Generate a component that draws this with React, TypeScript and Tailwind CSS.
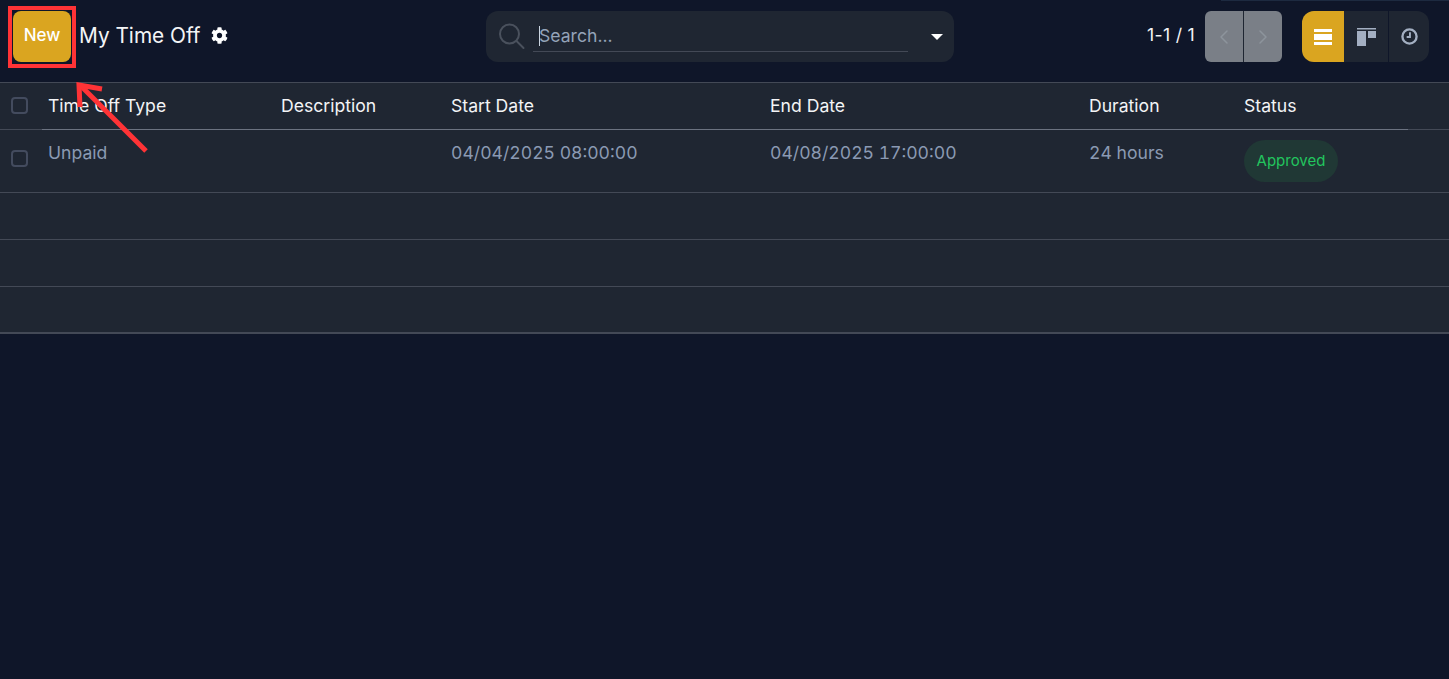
import { ChevronLeft, ChevronRight } from 'lucide-react';
import { FaCog } from 'react-icons/fa';

const COLS = 'grid grid-cols-[42px_232px_170px_319px_319px_155px_1fr]';

const Checkbox = () => (
  <span className="block w-[17px] h-[17px] rounded-[4px] border-2 border-[#434b5e] ml-[11px]" />
);

const App = () => {
  return (
    <div className="relative w-full h-[679px] overflow-hidden bg-[#0f1629] font-['Inter','Noto_Sans',sans-serif] text-[#f3f4f6]">
      {/* control panel */}
      <div className="relative h-[82px]">
        <div className="absolute top-0 right-0 w-[228px] h-px bg-[#1d2a40]" />
        <div className="flex items-start pt-[11px] pl-[13px] pr-[20px]">
          <div className="flex items-center h-[51px] w-[473px] shrink-0">
            <button className="w-[58px] h-[51px] rounded-[8px] bg-[#daa520] pb-[2px] text-[17px] font-medium text-white">
              New
            </button>
            <span className="ml-[8px] pb-[1px] text-[20.8px] leading-none text-[#f3f4f6]">My Time Off</span>
            <FaCog className="ml-[10px] mb-[3px] w-[17px] h-[17px] text-white" />
          </div>

          <div className="flex items-center w-[468px] h-[51px] rounded-[12px] bg-[#1f2632] pl-[12px] shrink-0">
            <svg width="27" height="27" viewBox="0 0 27 27" fill="none" stroke="#4a515d" strokeWidth="2" strokeLinecap="round">
              <circle cx="11.5" cy="11" r="9.5" />
              <path d="M18.5 18l7 7" />
            </svg>
            <div className="relative ml-[8px] w-[375px] h-[31px] border-b border-[#434956] flex items-center pl-[6px]">
              <span className="absolute left-[6px] top-[5px] w-px h-[20px] bg-[#cbd5e1]" />
              <span className="text-[17.6px] text-[#94a3b8]">Search...</span>
            </div>
            <span className="ml-[23px] w-0 h-0 border-x-[6px] border-x-transparent border-t-[6px] border-t-white" />
          </div>

          <div className="flex items-center h-[51px] ml-auto">
            <span className="pb-[3px] text-[17.6px] tracking-[0.3px] text-[#f3f4f6]">1-1 / 1</span>
            <div className="flex ml-[10px] h-[51px] rounded-[6px] overflow-hidden bg-[#7a7f87]">
              <span className="flex items-center justify-center w-[39px] border-r border-[#1f2632]">
                <ChevronLeft className="w-[24px] h-[24px] text-[#8d949c]" strokeWidth={1.5} />
              </span>
              <span className="flex items-center justify-center w-[38px]">
                <ChevronRight className="w-[24px] h-[24px] text-[#8d949c]" strokeWidth={1.5} />
              </span>
            </div>
            <div className="flex ml-[20px] h-[51px] rounded-[12px] overflow-hidden bg-[#1f2632]">
              <span className="flex flex-col items-center justify-center gap-[2px] w-[42px] bg-[#daa520]">
                <span className="block w-[18px] h-[3px] bg-white" />
                <span className="block w-[18px] h-[6px] bg-white" />
                <span className="block w-[18px] h-[3px] bg-white" />
              </span>
              <span className="flex items-center justify-center w-[45px] border-r border-[#0f1629]">
                <svg width="19" height="18" viewBox="0 0 19 18" fill="#a3afc2">
                  <path d="M0 0h19v1.5H0zM0 3h9v15H0zM11 3h8v7h-8z" />
                </svg>
              </span>
              <span className="flex items-center justify-center w-[40px]">
                <svg width="17" height="17" viewBox="0 0 18 18" fill="none" stroke="#a3afc2" strokeWidth="2.5">
                  <circle cx="9" cy="9" r="7.5" />
                  <path d="M9.5 4.5v5H6" strokeWidth="2" />
                </svg>
              </span>
            </div>
          </div>
        </div>
      </div>

      {/* list */}
      <div className="bg-[#1f2632] border-t border-[#434956] text-[17.6px]">
        <div className={`${COLS} h-[46px] items-center text-[#f3f4f6]`}>
          <div className="pb-[1px]">
            <Checkbox />
          </div>
          <span className="pl-[6px]">Time Off Type</span>
          <span className="pl-[7px]">Description</span>
          <span className="pl-[7px]">Start Date</span>
          <span className="pl-[7px]">End Date</span>
          <span className="pl-[7px]">Duration</span>
          <span className="pl-[7px]">Status</span>
        </div>
        <div className="h-px bg-[#434956]">
          <div className="ml-[42px] w-[1366px] h-px bg-[#6b7280]" />
        </div>
        <div className={`${COLS} h-[63px] border-b border-[#434956] text-[#8b9ab3] tabular-nums`}>
          <div className="pt-[20px]">
            <Checkbox />
          </div>
          <span className="pl-[6px] pt-[10px]">Unpaid</span>
          <span />
          <span className="pl-[7px] pt-[10px]">04/04/2025 08:00:00</span>
          <span className="pl-[7px] pt-[10px]">04/08/2025 17:00:00</span>
          <span className="pl-[7px] pt-[10px]">24 hours</span>
          <div className="pl-[7px] pt-[10px]">
            <span className="flex items-center justify-center w-[94px] h-[42px] rounded-full bg-[#203835] text-[15px] text-[#22c55e]">
              Approved
            </span>
          </div>
        </div>
        <div className="h-[47px] border-b border-[#434956]" />
        <div className="h-[47px] border-b border-[#434956]" />
        <div className="h-[47px] border-b-2 border-[#434956]" />
      </div>

      {/* screenshot annotation */}
      <div className="absolute left-[8px] top-[6px] w-[68px] h-[62px] border-[4px] border-[#ff3336]" />
      <svg className="absolute left-[70px] top-[76px]" width="84" height="82" viewBox="0 0 84 82" fill="none" stroke="#ff3336" strokeWidth="5">
        <path d="M76 75L11 10" />
        <path d="M10 31L9 9l23 4" />
      </svg>
    </div>
  );
};

export default App;
